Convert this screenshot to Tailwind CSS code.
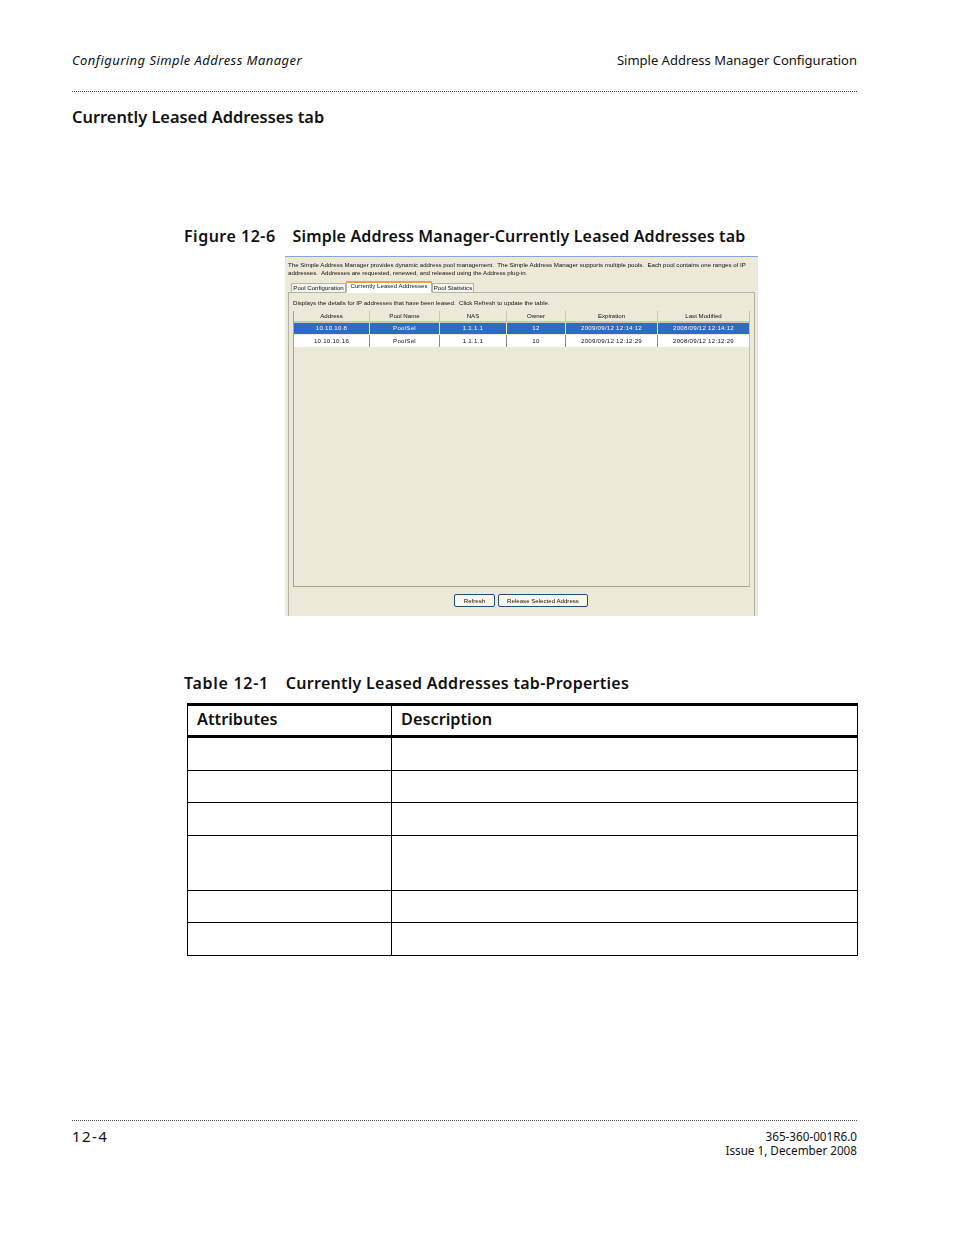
<!DOCTYPE html>
<html lang="en">
<head>
<meta charset="UTF-8">
<title>Currently Leased Addresses tab</title>
<script src="https://cdn.jsdelivr.net/npm/@tailwindcss/browser@4"></script>
</head>
<body class="bg-white text-[#111] font-['Noto_Sans',sans-serif]">
<div class="w-[954px] h-[1235px] pl-[72px] pr-[97px] pt-[51px] flex flex-col">
  <!-- Header -->
  <header class="flex justify-between text-[13px] leading-[18px] h-[18px]">
    <span class="italic tracking-[0.45px]">Configuring Simple Address Manager</span>
    <span>Simple Address Manager Configuration</span>
  </header>
  <div class="mt-[22px] border-t border-dotted border-[#555]"></div>
  <h2 class="mt-[13px] text-[16.4px] leading-[24px] font-semibold">Currently Leased Addresses tab</h2>

  <h3 class="mt-[95px] ml-[112px] text-[16px] leading-[24px] font-semibold flex gap-[17px]"><span class="tracking-[0.5px]">Figure 12-6</span><span class="tracking-[0.15px]">Simple Address Manager-Currently Leased Addresses tab</span></h3>

  <!-- Screenshot -->
  <div class="mt-[8px] ml-[213px] w-[473px] h-[360px] bg-[#ece9d8] border-t border-t-[#7fa8d8] pl-[3px] pr-[3px] flex flex-col font-['Liberation_Sans',sans-serif] text-[#111] text-[6.13px] leading-[8px] overflow-hidden blur-[0.25px]">
    <div class="pt-[4px] h-[24px] shrink-0">
      <p>The Simple Address Manager provides dynamic address pool management.&nbsp; The Simple Address Manager supports multiple pools.&nbsp; Each pool contains one ranges of IP</p>
      <p>addresses.&nbsp; Addresses are requested, renewed, and released using the Address plug-in.</p>
    </div>
    <div class="flex items-end pl-[3px] h-[12px] shrink-0 relative z-10 -mb-px">
      <span class="w-[55px] h-[10px] border border-[#b5b3a4] bg-[#f6f5ee] text-center leading-[7px]">Pool Configuration</span>
      <span class="w-[86px] h-[12px] border border-[#b5b3a4] border-t-2 border-t-[#e8a33a] border-b-white bg-white text-center leading-[6px]">Currently Leased Addresses</span>
      <span class="w-[42px] h-[10px] border border-[#b5b3a4] bg-[#f6f5ee] text-center leading-[7px]">Pool Statistics</span>
    </div>
    <div class="flex-1 border border-[#b5b3a4] border-b-0 px-[4px] flex flex-col">
      <p class="h-[18px] shrink-0 pt-[6px]">Displays the details for IP addresses that have been leased.&nbsp; Click Refresh to update the table.</p>
      <div class="h-[276px] w-[457px] shrink-0 border-b border-b-[#a3a390] border-l border-l-[#a3a390] border-r border-r-[#c4c2b0]">
        <div class="grid grid-cols-[76px_70px_67px_59px_92px_1fr] h-[12px] bg-[#ece9d8] border-b-2 border-b-[#c9c7b6] text-center leading-[10px]">
          <span class="border-r border-[#c9c7b6]">Address</span>
          <span class="border-r border-[#c9c7b6]">Pool Name</span>
          <span class="border-r border-[#c9c7b6]">NAS</span>
          <span class="border-r border-[#c9c7b6]">Owner</span>
          <span class="border-r border-[#c9c7b6]">Expiration</span>
          <span>Last Modified</span>
        </div>
        <div class="grid grid-cols-[76px_70px_67px_59px_92px_1fr] h-[12px] bg-[#316ac5] text-white text-center leading-[10px] tracking-[0.25px] border-b border-b-[#ece9d8]">
          <span class="border-r border-[#ece9d8]">10.10.10.8</span>
          <span class="border-r border-[#ece9d8]">PoolSel</span>
          <span class="border-r border-[#ece9d8]">1.1.1.1</span>
          <span class="border-r border-[#ece9d8]">12</span>
          <span class="border-r border-[#ece9d8]">2009/09/12 12:14:12</span>
          <span>2008/09/12 12:14:12</span>
        </div>
        <div class="grid grid-cols-[76px_70px_67px_59px_92px_1fr] h-[12px] bg-white text-center leading-[11px] tracking-[0.25px]">
          <span class="border-r border-[#8a8a80]">10.10.10.16</span>
          <span class="border-r border-[#8a8a80]">PoolSel</span>
          <span class="border-r border-[#8a8a80]">1.1.1.1</span>
          <span class="border-r border-[#8a8a80]">10</span>
          <span class="border-r border-[#8a8a80]">2009/09/12 12:12:29</span>
          <span>2008/09/12 12:12:29</span>
        </div>
      </div>
      <div class="mt-[7px] ml-[161px] flex gap-[3px]">
        <span class="w-[41px] h-[13px] border border-[#1f4e79] rounded-[2px] bg-[#f8f7f0] text-center leading-[11px]">Refresh</span>
        <span class="w-[90px] h-[13px] border border-[#1f4e79] rounded-[2px] bg-[#f8f7f0] text-center leading-[11px]">Release Selected Address</span>
      </div>
    </div>
  </div>

  <h3 class="mt-[55px] ml-[112px] text-[16px] leading-[24px] font-semibold flex gap-[17px]"><span class="tracking-[0.7px]">Table 12-1</span><span class="tracking-[0.27px]">Currently Leased Addresses tab-Properties</span></h3>

  <!-- Properties table -->
  <div class="mt-[8px] ml-[115px] w-[671px] border border-black border-t-[3px] grid grid-cols-[204px_1fr]">
    <div class="h-[32px] border-r border-black border-b-[3px] px-[9px] text-[16.3px] leading-[26px] font-semibold">Attributes</div>
    <div class="h-[32px] border-b-[3px] border-black px-[9px] text-[16.3px] leading-[26px] font-semibold">Description</div>
    <div class="h-[33px] border-r border-b border-black"></div><div class="h-[33px] border-b border-black"></div>
    <div class="h-[32px] border-r border-b border-black"></div><div class="h-[32px] border-b border-black"></div>
    <div class="h-[33px] border-r border-b border-black"></div><div class="h-[33px] border-b border-black"></div>
    <div class="h-[55px] border-r border-b border-black"></div><div class="h-[55px] border-b border-black"></div>
    <div class="h-[32px] border-r border-b border-black"></div><div class="h-[32px] border-b border-black"></div>
    <div class="h-[32px] border-r border-black"></div><div class="h-[32px]"></div>
  </div>

  <!-- Footer -->
  <div class="mt-[164px] border-t border-dotted border-[#555]"></div>
  <footer class="mt-[6px] flex justify-between">
    <span class="text-[15px] leading-[18px] tracking-[1.4px]">12-4</span>
    <div class="pt-[2px] text-right text-[11.7px] leading-[14px]">
      <p>365-360-001R6.0</p>
      <p>Issue 1, December 2008</p>
    </div>
  </footer>
</div>
</body>
</html>
